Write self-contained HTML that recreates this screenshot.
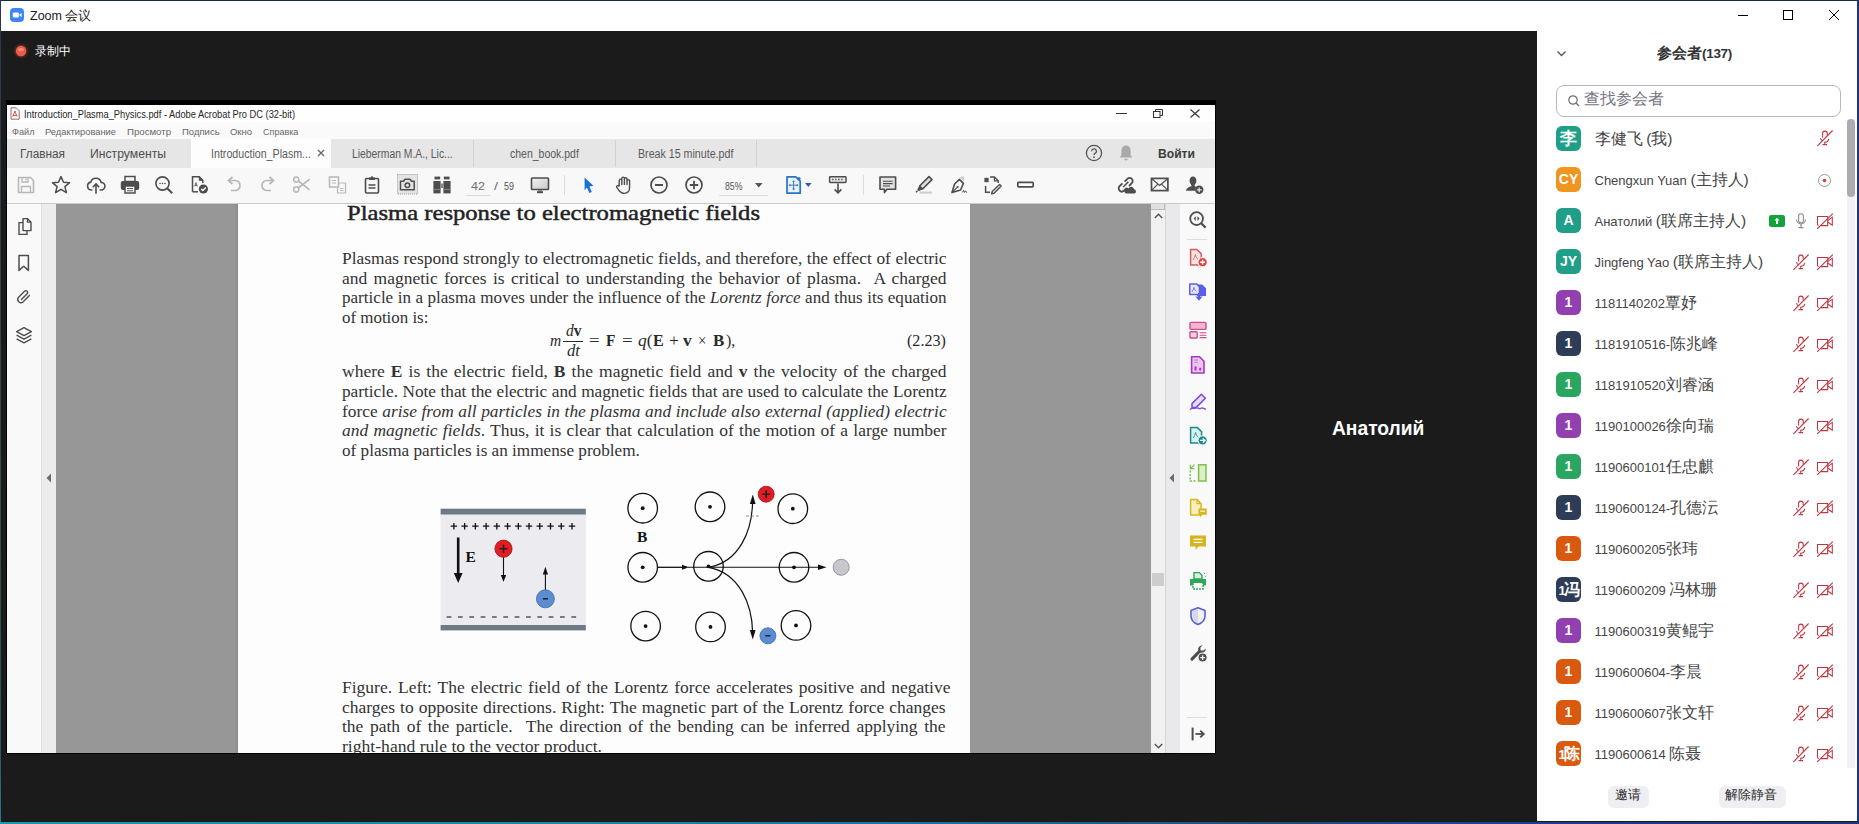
<!DOCTYPE html>
<html><head><meta charset="utf-8">
<style>
*{margin:0;padding:0;box-sizing:border-box}
html,body{width:1859px;height:824px;overflow:hidden;background:#1b1b1b;font-family:"Liberation Sans",sans-serif}
.a{position:absolute}
.t{position:absolute;white-space:nowrap}
svg.i{position:absolute;overflow:visible}
.cj{font-family:"Liberation Sans",sans-serif}

</style></head><body>
<div class="a" style="left:0px;top:0px;width:1859px;height:1px;background:#1b2a48;"></div>
<div class="a" style="left:0px;top:0px;width:1px;height:824px;background:linear-gradient(180deg,#2a3550 0px,#3a4a40 400px,#2a5a60 760px,#2a7a90 824px);"></div>
<div class="a" style="left:1857px;top:0px;width:2px;height:824px;background:#1c3478;"></div>
<div class="a" style="left:0px;top:822px;width:1859px;height:2px;background:linear-gradient(90deg,#1a98b0 0px,#1a88a8 500px,#1d72a0 900px,#1c4c7c 1300px,#1e4890 1400px,#1c3a88 1600px,#1c3478 1859px);"></div>
<div class="a" style="left:1px;top:1px;width:1856px;height:30px;background:#ffffff;"></div>
<svg class="i" style="left:10px;top:8px;" width="14" height="14" viewBox="0 0 14 14"><rect x="0" y="0" width="14" height="14" rx="4" fill="#3d86f4"/><rect x="2.8" y="4.6" width="6" height="4.8" rx="1" fill="#fff"/><path d="M9.4 6.4 L11.6 5 V9 L9.4 7.6Z" fill="#fff"/></svg>
<div class="t" style="left:30.00px;top:10.02px;font-size:12.5px;line-height:12.5px;color:#1a1a1a;font-weight:400;font-family:'Liberation Sans',sans-serif;">Zoom <span style="font-size:13px">会议</span></div>
<div class="a" style="left:1738px;top:15px;width:10px;height:1px;background:#000;"></div>
<div class="a" style="left:1783px;top:10px;width:10px;height:10px;background:transparent;border:1px solid #000"></div>
<svg class="i" style="left:1829px;top:10px;" width="10" height="10" viewBox="0 0 10 10"><path d="M0 0L10 10M10 0L0 10" stroke="#000" stroke-width="1"/></svg>
<svg class="i" style="left:13px;top:43px;" width="16" height="16" viewBox="0 0 16 16"><defs><radialGradient id="rg"><stop offset="0.5" stop-color="#e0503a" stop-opacity="0.9"/><stop offset="1" stop-color="#e0503a" stop-opacity="0"/></radialGradient></defs><circle cx="8" cy="8" r="8" fill="url(#rg)" opacity="0.5"/><circle cx="8" cy="8" r="5.2" fill="#ee5a4a"/><ellipse cx="8" cy="6.5" rx="3" ry="1.6" fill="#ffaa99" opacity="0.6"/></svg>
<div class="t" style="left:35.00px;top:44.64px;font-size:12px;line-height:12px;color:#fff;font-weight:400;font-family:'Liberation Sans',sans-serif;">录制中</div>
<div class="t" style="left:1332.00px;top:417.57px;font-size:20px;line-height:20px;color:#fff;font-weight:700;font-family:'Liberation Sans',sans-serif;transform:scaleX(0.96);transform-origin:0 0">Анатолий</div>
<div class="a" style="left:1537px;top:31px;width:320px;height:790px;background:#ffffff;"></div>
<svg class="i" style="left:1557px;top:51px;" width="9" height="5" viewBox="0 0 9 5"><path d="M0.5 0.5L4.5 4.5L8.5 0.5" stroke="#555" stroke-width="1.3" fill="none"/></svg>
<div class="t" style="left:1657.00px;top:44.50px;font-size:15px;line-height:15px;color:#333;font-weight:700;font-family:'Liberation Sans',sans-serif;">参会者<span style="font-size:13.5px;letter-spacing:-0.3px">(137)</span></div>
<div class="a" style="left:1556px;top:85px;width:285px;height:32px;background:#fff;border:1px solid #b8b8c0;border-radius:8px"></div>
<svg class="i" style="left:1568px;top:95px;" width="12" height="12" viewBox="0 0 12 12"><circle cx="5" cy="5" r="4.2" stroke="#6e6e78" stroke-width="1.2" fill="none"/><path d="M8 8L11 11" stroke="#6e6e78" stroke-width="1.3"/></svg>
<div class="t" style="left:1584.00px;top:91.46px;font-size:16px;line-height:16px;color:#757584;font-weight:400;font-family:'Liberation Sans',sans-serif;">查找参会者</div>
<div class="a" style="left:1847px;top:119px;width:8px;height:649px;background:#f2f2f6;"></div>
<div class="a" style="left:1847px;top:119px;width:8px;height:78px;background:#ababb4;border-radius:4px"></div>
<div class="a" style="left:1556px;top:126px;width:25px;height:25px;border-radius:6px;background:#1f9f87;overflow:hidden"><div class="t" style="left:0;top:0;width:25px;height:25px;line-height:25px;text-align:center;color:#fff;font-weight:700;font-size:17px">李</div></div>
<div class="t" style="left:1594.50px;top:131.80px;font-size:13px;line-height:13px;color:#454545;font-weight:400;font-family:'Liberation Sans',sans-serif;"><span style="font-size:15.5px">李健飞</span> <span style="font-size:15.5px">(我)</span></div>
<svg class="i" style="left:1817px;top:130px;" width="16" height="16" viewBox="0 0 16 16"><path d="M5.6 7.6V3.4a2.3 2.3 0 0 1 4.6 0V5.2" stroke="#bf3540" stroke-width="1.05" fill="none"/><path d="M3.6 8a4.4 4.4 0 0 0 1.2 2.6M7 12.2a4.4 4.4 0 0 0 4.8-3.4" stroke="#bf3540" stroke-width="1.05" fill="none"/><path d="M7.8 12.4V14.4M5.6 14.6H10" stroke="#bf3540" stroke-width="1.1"/><path d="M0.4 15.8L15.6 0.5" stroke="#bf3540" stroke-width="1.1"/></svg>
<div class="a" style="left:1556px;top:167px;width:25px;height:25px;border-radius:6px;background:#f0951f;overflow:hidden"><div class="t" style="left:0;top:0;width:25px;height:25px;line-height:25px;text-align:center;color:#fff;font-weight:700;font-size:14px">CY</div></div>
<div class="t" style="left:1594.50px;top:172.80px;font-size:13px;line-height:13px;color:#454545;font-weight:400;font-family:'Liberation Sans',sans-serif;">Chengxun Yuan <span style="font-size:15.5px">(主持人)</span></div>
<svg class="i" style="left:1818px;top:174px;" width="13" height="13" viewBox="0 0 13 13"><circle cx="6.5" cy="6.5" r="6" stroke="#999" stroke-width="1" fill="none"/><circle cx="6.5" cy="6.5" r="1.8" fill="#e23b3b"/></svg>
<div class="a" style="left:1556px;top:208px;width:25px;height:25px;border-radius:6px;background:#1f9f87;overflow:hidden"><div class="t" style="left:0;top:0;width:25px;height:25px;line-height:25px;text-align:center;color:#fff;font-weight:700;font-size:14px">A</div></div>
<div class="t" style="left:1594.50px;top:213.80px;font-size:13px;line-height:13px;color:#454545;font-weight:400;font-family:'Liberation Sans',sans-serif;">Анатолий <span style="font-size:15.5px">(联席主持人)</span></div>
<svg class="i" style="left:1769px;top:215px;" width="16" height="12" viewBox="0 0 16 12"><rect width="16" height="12" rx="2.2" fill="#12a33a"/><path d="M8 2.8L10.6 5.6H9V9H7V5.6H5.4Z" fill="#fff"/></svg>
<svg class="i" style="left:1795px;top:213px;" width="12" height="16" viewBox="0 0 12 16"><rect x="3.6" y="0.8" width="4.8" height="9" rx="2.4" stroke="#8a8a8a" stroke-width="1.1" fill="none"/><path d="M1.6 6.6a4.4 4.4 0 0 0 8.8 0" stroke="#8a8a8a" stroke-width="1.1" fill="none"/><path d="M6 11V14.2M3.5 14.6H8.5" stroke="#8a8a8a" stroke-width="1.1"/></svg>
<svg class="i" style="left:1817px;top:213px;" width="17" height="16" viewBox="0 0 17 16"><path d="M1.6 12.6L0.5 11.5V3.5H10.7V12.6H4" stroke="#bf3540" stroke-width="1.05" fill="none"/><path d="M10.7 7.6L15.3 4.2V12.2L10.7 9" stroke="#bf3540" stroke-width="1.05" fill="none"/><path d="M0.2 15.8L15.8 0.6" stroke="#bf3540" stroke-width="1.1"/></svg>
<div class="a" style="left:1556px;top:249px;width:25px;height:25px;border-radius:6px;background:#1f9f87;overflow:hidden"><div class="t" style="left:0;top:0;width:25px;height:25px;line-height:25px;text-align:center;color:#fff;font-weight:700;font-size:14px">JY</div></div>
<div class="t" style="left:1594.50px;top:254.80px;font-size:13px;line-height:13px;color:#454545;font-weight:400;font-family:'Liberation Sans',sans-serif;">Jingfeng Yao <span style="font-size:15.5px">(联席主持人)</span></div>
<svg class="i" style="left:1793px;top:254px;" width="16" height="16" viewBox="0 0 16 16"><path d="M5.6 7.6V3.4a2.3 2.3 0 0 1 4.6 0V5.2" stroke="#bf3540" stroke-width="1.05" fill="none"/><path d="M3.6 8a4.4 4.4 0 0 0 1.2 2.6M7 12.2a4.4 4.4 0 0 0 4.8-3.4" stroke="#bf3540" stroke-width="1.05" fill="none"/><path d="M7.8 12.4V14.4M5.6 14.6H10" stroke="#bf3540" stroke-width="1.1"/><path d="M0.4 15.8L15.6 0.5" stroke="#bf3540" stroke-width="1.1"/></svg>
<svg class="i" style="left:1817px;top:254px;" width="17" height="16" viewBox="0 0 17 16"><path d="M1.6 12.6L0.5 11.5V3.5H10.7V12.6H4" stroke="#bf3540" stroke-width="1.05" fill="none"/><path d="M10.7 7.6L15.3 4.2V12.2L10.7 9" stroke="#bf3540" stroke-width="1.05" fill="none"/><path d="M0.2 15.8L15.8 0.6" stroke="#bf3540" stroke-width="1.1"/></svg>
<div class="a" style="left:1556px;top:290px;width:25px;height:25px;border-radius:6px;background:#9240b0;overflow:hidden"><div class="t" style="left:0;top:0;width:25px;height:25px;line-height:25px;text-align:center;color:#fff;font-weight:700;font-size:14px">1</div></div>
<div class="t" style="left:1594.50px;top:295.80px;font-size:13px;line-height:13px;color:#454545;font-weight:400;font-family:'Liberation Sans',sans-serif;">1181140202<span style="font-size:15.5px">覃妤</span></div>
<svg class="i" style="left:1793px;top:295px;" width="16" height="16" viewBox="0 0 16 16"><path d="M5.6 7.6V3.4a2.3 2.3 0 0 1 4.6 0V5.2" stroke="#bf3540" stroke-width="1.05" fill="none"/><path d="M3.6 8a4.4 4.4 0 0 0 1.2 2.6M7 12.2a4.4 4.4 0 0 0 4.8-3.4" stroke="#bf3540" stroke-width="1.05" fill="none"/><path d="M7.8 12.4V14.4M5.6 14.6H10" stroke="#bf3540" stroke-width="1.1"/><path d="M0.4 15.8L15.6 0.5" stroke="#bf3540" stroke-width="1.1"/></svg>
<svg class="i" style="left:1817px;top:295px;" width="17" height="16" viewBox="0 0 17 16"><path d="M1.6 12.6L0.5 11.5V3.5H10.7V12.6H4" stroke="#bf3540" stroke-width="1.05" fill="none"/><path d="M10.7 7.6L15.3 4.2V12.2L10.7 9" stroke="#bf3540" stroke-width="1.05" fill="none"/><path d="M0.2 15.8L15.8 0.6" stroke="#bf3540" stroke-width="1.1"/></svg>
<div class="a" style="left:1556px;top:331px;width:25px;height:25px;border-radius:6px;background:#2d3d57;overflow:hidden"><div class="t" style="left:0;top:0;width:25px;height:25px;line-height:25px;text-align:center;color:#fff;font-weight:700;font-size:14px">1</div></div>
<div class="t" style="left:1594.50px;top:336.80px;font-size:13px;line-height:13px;color:#454545;font-weight:400;font-family:'Liberation Sans',sans-serif;">1181910516-<span style="font-size:15.5px">陈兆峰</span></div>
<svg class="i" style="left:1793px;top:336px;" width="16" height="16" viewBox="0 0 16 16"><path d="M5.6 7.6V3.4a2.3 2.3 0 0 1 4.6 0V5.2" stroke="#bf3540" stroke-width="1.05" fill="none"/><path d="M3.6 8a4.4 4.4 0 0 0 1.2 2.6M7 12.2a4.4 4.4 0 0 0 4.8-3.4" stroke="#bf3540" stroke-width="1.05" fill="none"/><path d="M7.8 12.4V14.4M5.6 14.6H10" stroke="#bf3540" stroke-width="1.1"/><path d="M0.4 15.8L15.6 0.5" stroke="#bf3540" stroke-width="1.1"/></svg>
<svg class="i" style="left:1817px;top:336px;" width="17" height="16" viewBox="0 0 17 16"><path d="M1.6 12.6L0.5 11.5V3.5H10.7V12.6H4" stroke="#bf3540" stroke-width="1.05" fill="none"/><path d="M10.7 7.6L15.3 4.2V12.2L10.7 9" stroke="#bf3540" stroke-width="1.05" fill="none"/><path d="M0.2 15.8L15.8 0.6" stroke="#bf3540" stroke-width="1.1"/></svg>
<div class="a" style="left:1556px;top:372px;width:25px;height:25px;border-radius:6px;background:#2aa660;overflow:hidden"><div class="t" style="left:0;top:0;width:25px;height:25px;line-height:25px;text-align:center;color:#fff;font-weight:700;font-size:14px">1</div></div>
<div class="t" style="left:1594.50px;top:377.80px;font-size:13px;line-height:13px;color:#454545;font-weight:400;font-family:'Liberation Sans',sans-serif;">1181910520<span style="font-size:15.5px">刘睿涵</span></div>
<svg class="i" style="left:1793px;top:377px;" width="16" height="16" viewBox="0 0 16 16"><path d="M5.6 7.6V3.4a2.3 2.3 0 0 1 4.6 0V5.2" stroke="#bf3540" stroke-width="1.05" fill="none"/><path d="M3.6 8a4.4 4.4 0 0 0 1.2 2.6M7 12.2a4.4 4.4 0 0 0 4.8-3.4" stroke="#bf3540" stroke-width="1.05" fill="none"/><path d="M7.8 12.4V14.4M5.6 14.6H10" stroke="#bf3540" stroke-width="1.1"/><path d="M0.4 15.8L15.6 0.5" stroke="#bf3540" stroke-width="1.1"/></svg>
<svg class="i" style="left:1817px;top:377px;" width="17" height="16" viewBox="0 0 17 16"><path d="M1.6 12.6L0.5 11.5V3.5H10.7V12.6H4" stroke="#bf3540" stroke-width="1.05" fill="none"/><path d="M10.7 7.6L15.3 4.2V12.2L10.7 9" stroke="#bf3540" stroke-width="1.05" fill="none"/><path d="M0.2 15.8L15.8 0.6" stroke="#bf3540" stroke-width="1.1"/></svg>
<div class="a" style="left:1556px;top:413px;width:25px;height:25px;border-radius:6px;background:#9240b0;overflow:hidden"><div class="t" style="left:0;top:0;width:25px;height:25px;line-height:25px;text-align:center;color:#fff;font-weight:700;font-size:14px">1</div></div>
<div class="t" style="left:1594.50px;top:418.80px;font-size:13px;line-height:13px;color:#454545;font-weight:400;font-family:'Liberation Sans',sans-serif;">1190100026<span style="font-size:15.5px">徐向瑞</span></div>
<svg class="i" style="left:1793px;top:418px;" width="16" height="16" viewBox="0 0 16 16"><path d="M5.6 7.6V3.4a2.3 2.3 0 0 1 4.6 0V5.2" stroke="#bf3540" stroke-width="1.05" fill="none"/><path d="M3.6 8a4.4 4.4 0 0 0 1.2 2.6M7 12.2a4.4 4.4 0 0 0 4.8-3.4" stroke="#bf3540" stroke-width="1.05" fill="none"/><path d="M7.8 12.4V14.4M5.6 14.6H10" stroke="#bf3540" stroke-width="1.1"/><path d="M0.4 15.8L15.6 0.5" stroke="#bf3540" stroke-width="1.1"/></svg>
<svg class="i" style="left:1817px;top:418px;" width="17" height="16" viewBox="0 0 17 16"><path d="M1.6 12.6L0.5 11.5V3.5H10.7V12.6H4" stroke="#bf3540" stroke-width="1.05" fill="none"/><path d="M10.7 7.6L15.3 4.2V12.2L10.7 9" stroke="#bf3540" stroke-width="1.05" fill="none"/><path d="M0.2 15.8L15.8 0.6" stroke="#bf3540" stroke-width="1.1"/></svg>
<div class="a" style="left:1556px;top:454px;width:25px;height:25px;border-radius:6px;background:#2aa660;overflow:hidden"><div class="t" style="left:0;top:0;width:25px;height:25px;line-height:25px;text-align:center;color:#fff;font-weight:700;font-size:14px">1</div></div>
<div class="t" style="left:1594.50px;top:459.80px;font-size:13px;line-height:13px;color:#454545;font-weight:400;font-family:'Liberation Sans',sans-serif;">1190600101<span style="font-size:15.5px">任忠麒</span></div>
<svg class="i" style="left:1793px;top:459px;" width="16" height="16" viewBox="0 0 16 16"><path d="M5.6 7.6V3.4a2.3 2.3 0 0 1 4.6 0V5.2" stroke="#bf3540" stroke-width="1.05" fill="none"/><path d="M3.6 8a4.4 4.4 0 0 0 1.2 2.6M7 12.2a4.4 4.4 0 0 0 4.8-3.4" stroke="#bf3540" stroke-width="1.05" fill="none"/><path d="M7.8 12.4V14.4M5.6 14.6H10" stroke="#bf3540" stroke-width="1.1"/><path d="M0.4 15.8L15.6 0.5" stroke="#bf3540" stroke-width="1.1"/></svg>
<svg class="i" style="left:1817px;top:459px;" width="17" height="16" viewBox="0 0 17 16"><path d="M1.6 12.6L0.5 11.5V3.5H10.7V12.6H4" stroke="#bf3540" stroke-width="1.05" fill="none"/><path d="M10.7 7.6L15.3 4.2V12.2L10.7 9" stroke="#bf3540" stroke-width="1.05" fill="none"/><path d="M0.2 15.8L15.8 0.6" stroke="#bf3540" stroke-width="1.1"/></svg>
<div class="a" style="left:1556px;top:495px;width:25px;height:25px;border-radius:6px;background:#2d3d57;overflow:hidden"><div class="t" style="left:0;top:0;width:25px;height:25px;line-height:25px;text-align:center;color:#fff;font-weight:700;font-size:14px">1</div></div>
<div class="t" style="left:1594.50px;top:500.80px;font-size:13px;line-height:13px;color:#454545;font-weight:400;font-family:'Liberation Sans',sans-serif;">1190600124-<span style="font-size:15.5px">孔德沄</span></div>
<svg class="i" style="left:1793px;top:500px;" width="16" height="16" viewBox="0 0 16 16"><path d="M5.6 7.6V3.4a2.3 2.3 0 0 1 4.6 0V5.2" stroke="#bf3540" stroke-width="1.05" fill="none"/><path d="M3.6 8a4.4 4.4 0 0 0 1.2 2.6M7 12.2a4.4 4.4 0 0 0 4.8-3.4" stroke="#bf3540" stroke-width="1.05" fill="none"/><path d="M7.8 12.4V14.4M5.6 14.6H10" stroke="#bf3540" stroke-width="1.1"/><path d="M0.4 15.8L15.6 0.5" stroke="#bf3540" stroke-width="1.1"/></svg>
<svg class="i" style="left:1817px;top:500px;" width="17" height="16" viewBox="0 0 17 16"><path d="M1.6 12.6L0.5 11.5V3.5H10.7V12.6H4" stroke="#bf3540" stroke-width="1.05" fill="none"/><path d="M10.7 7.6L15.3 4.2V12.2L10.7 9" stroke="#bf3540" stroke-width="1.05" fill="none"/><path d="M0.2 15.8L15.8 0.6" stroke="#bf3540" stroke-width="1.1"/></svg>
<div class="a" style="left:1556px;top:536px;width:25px;height:25px;border-radius:6px;background:#d95a0e;overflow:hidden"><div class="t" style="left:0;top:0;width:25px;height:25px;line-height:25px;text-align:center;color:#fff;font-weight:700;font-size:14px">1</div></div>
<div class="t" style="left:1594.50px;top:541.80px;font-size:13px;line-height:13px;color:#454545;font-weight:400;font-family:'Liberation Sans',sans-serif;">1190600205<span style="font-size:15.5px">张玮</span></div>
<svg class="i" style="left:1793px;top:541px;" width="16" height="16" viewBox="0 0 16 16"><path d="M5.6 7.6V3.4a2.3 2.3 0 0 1 4.6 0V5.2" stroke="#bf3540" stroke-width="1.05" fill="none"/><path d="M3.6 8a4.4 4.4 0 0 0 1.2 2.6M7 12.2a4.4 4.4 0 0 0 4.8-3.4" stroke="#bf3540" stroke-width="1.05" fill="none"/><path d="M7.8 12.4V14.4M5.6 14.6H10" stroke="#bf3540" stroke-width="1.1"/><path d="M0.4 15.8L15.6 0.5" stroke="#bf3540" stroke-width="1.1"/></svg>
<svg class="i" style="left:1817px;top:541px;" width="17" height="16" viewBox="0 0 17 16"><path d="M1.6 12.6L0.5 11.5V3.5H10.7V12.6H4" stroke="#bf3540" stroke-width="1.05" fill="none"/><path d="M10.7 7.6L15.3 4.2V12.2L10.7 9" stroke="#bf3540" stroke-width="1.05" fill="none"/><path d="M0.2 15.8L15.8 0.6" stroke="#bf3540" stroke-width="1.1"/></svg>
<div class="a" style="left:1556px;top:577px;width:25px;height:25px;border-radius:6px;background:#2d3d57;overflow:hidden"><div class="t" style="left:0;top:0;width:25px;height:25px;line-height:25px;text-align:center;color:#fff;font-weight:700;font-size:13px;letter-spacing:-1.5px">1<span style="font-size:16px">冯</span></div></div>
<div class="t" style="left:1594.50px;top:582.80px;font-size:13px;line-height:13px;color:#454545;font-weight:400;font-family:'Liberation Sans',sans-serif;">1190600209 <span style="font-size:15.5px">冯林珊</span></div>
<svg class="i" style="left:1793px;top:582px;" width="16" height="16" viewBox="0 0 16 16"><path d="M5.6 7.6V3.4a2.3 2.3 0 0 1 4.6 0V5.2" stroke="#bf3540" stroke-width="1.05" fill="none"/><path d="M3.6 8a4.4 4.4 0 0 0 1.2 2.6M7 12.2a4.4 4.4 0 0 0 4.8-3.4" stroke="#bf3540" stroke-width="1.05" fill="none"/><path d="M7.8 12.4V14.4M5.6 14.6H10" stroke="#bf3540" stroke-width="1.1"/><path d="M0.4 15.8L15.6 0.5" stroke="#bf3540" stroke-width="1.1"/></svg>
<svg class="i" style="left:1817px;top:582px;" width="17" height="16" viewBox="0 0 17 16"><path d="M1.6 12.6L0.5 11.5V3.5H10.7V12.6H4" stroke="#bf3540" stroke-width="1.05" fill="none"/><path d="M10.7 7.6L15.3 4.2V12.2L10.7 9" stroke="#bf3540" stroke-width="1.05" fill="none"/><path d="M0.2 15.8L15.8 0.6" stroke="#bf3540" stroke-width="1.1"/></svg>
<div class="a" style="left:1556px;top:618px;width:25px;height:25px;border-radius:6px;background:#9240b0;overflow:hidden"><div class="t" style="left:0;top:0;width:25px;height:25px;line-height:25px;text-align:center;color:#fff;font-weight:700;font-size:14px">1</div></div>
<div class="t" style="left:1594.50px;top:623.80px;font-size:13px;line-height:13px;color:#454545;font-weight:400;font-family:'Liberation Sans',sans-serif;">1190600319<span style="font-size:15.5px">黄鲲宇</span></div>
<svg class="i" style="left:1793px;top:623px;" width="16" height="16" viewBox="0 0 16 16"><path d="M5.6 7.6V3.4a2.3 2.3 0 0 1 4.6 0V5.2" stroke="#bf3540" stroke-width="1.05" fill="none"/><path d="M3.6 8a4.4 4.4 0 0 0 1.2 2.6M7 12.2a4.4 4.4 0 0 0 4.8-3.4" stroke="#bf3540" stroke-width="1.05" fill="none"/><path d="M7.8 12.4V14.4M5.6 14.6H10" stroke="#bf3540" stroke-width="1.1"/><path d="M0.4 15.8L15.6 0.5" stroke="#bf3540" stroke-width="1.1"/></svg>
<svg class="i" style="left:1817px;top:623px;" width="17" height="16" viewBox="0 0 17 16"><path d="M1.6 12.6L0.5 11.5V3.5H10.7V12.6H4" stroke="#bf3540" stroke-width="1.05" fill="none"/><path d="M10.7 7.6L15.3 4.2V12.2L10.7 9" stroke="#bf3540" stroke-width="1.05" fill="none"/><path d="M0.2 15.8L15.8 0.6" stroke="#bf3540" stroke-width="1.1"/></svg>
<div class="a" style="left:1556px;top:659px;width:25px;height:25px;border-radius:6px;background:#d95a0e;overflow:hidden"><div class="t" style="left:0;top:0;width:25px;height:25px;line-height:25px;text-align:center;color:#fff;font-weight:700;font-size:14px">1</div></div>
<div class="t" style="left:1594.50px;top:664.80px;font-size:13px;line-height:13px;color:#454545;font-weight:400;font-family:'Liberation Sans',sans-serif;">1190600604-<span style="font-size:15.5px">李晨</span></div>
<svg class="i" style="left:1793px;top:664px;" width="16" height="16" viewBox="0 0 16 16"><path d="M5.6 7.6V3.4a2.3 2.3 0 0 1 4.6 0V5.2" stroke="#bf3540" stroke-width="1.05" fill="none"/><path d="M3.6 8a4.4 4.4 0 0 0 1.2 2.6M7 12.2a4.4 4.4 0 0 0 4.8-3.4" stroke="#bf3540" stroke-width="1.05" fill="none"/><path d="M7.8 12.4V14.4M5.6 14.6H10" stroke="#bf3540" stroke-width="1.1"/><path d="M0.4 15.8L15.6 0.5" stroke="#bf3540" stroke-width="1.1"/></svg>
<svg class="i" style="left:1817px;top:664px;" width="17" height="16" viewBox="0 0 17 16"><path d="M1.6 12.6L0.5 11.5V3.5H10.7V12.6H4" stroke="#bf3540" stroke-width="1.05" fill="none"/><path d="M10.7 7.6L15.3 4.2V12.2L10.7 9" stroke="#bf3540" stroke-width="1.05" fill="none"/><path d="M0.2 15.8L15.8 0.6" stroke="#bf3540" stroke-width="1.1"/></svg>
<div class="a" style="left:1556px;top:700px;width:25px;height:25px;border-radius:6px;background:#d95a0e;overflow:hidden"><div class="t" style="left:0;top:0;width:25px;height:25px;line-height:25px;text-align:center;color:#fff;font-weight:700;font-size:14px">1</div></div>
<div class="t" style="left:1594.50px;top:705.80px;font-size:13px;line-height:13px;color:#454545;font-weight:400;font-family:'Liberation Sans',sans-serif;">1190600607<span style="font-size:15.5px">张文轩</span></div>
<svg class="i" style="left:1793px;top:705px;" width="16" height="16" viewBox="0 0 16 16"><path d="M5.6 7.6V3.4a2.3 2.3 0 0 1 4.6 0V5.2" stroke="#bf3540" stroke-width="1.05" fill="none"/><path d="M3.6 8a4.4 4.4 0 0 0 1.2 2.6M7 12.2a4.4 4.4 0 0 0 4.8-3.4" stroke="#bf3540" stroke-width="1.05" fill="none"/><path d="M7.8 12.4V14.4M5.6 14.6H10" stroke="#bf3540" stroke-width="1.1"/><path d="M0.4 15.8L15.6 0.5" stroke="#bf3540" stroke-width="1.1"/></svg>
<svg class="i" style="left:1817px;top:705px;" width="17" height="16" viewBox="0 0 17 16"><path d="M1.6 12.6L0.5 11.5V3.5H10.7V12.6H4" stroke="#bf3540" stroke-width="1.05" fill="none"/><path d="M10.7 7.6L15.3 4.2V12.2L10.7 9" stroke="#bf3540" stroke-width="1.05" fill="none"/><path d="M0.2 15.8L15.8 0.6" stroke="#bf3540" stroke-width="1.1"/></svg>
<div class="a" style="left:1556px;top:741px;width:25px;height:25px;border-radius:6px;background:#d95a0e;overflow:hidden"><div class="t" style="left:0;top:0;width:25px;height:25px;line-height:25px;text-align:center;color:#fff;font-weight:700;font-size:13px;letter-spacing:-1.5px">1<span style="font-size:16px">陈</span></div></div>
<div class="t" style="left:1594.50px;top:746.80px;font-size:13px;line-height:13px;color:#454545;font-weight:400;font-family:'Liberation Sans',sans-serif;">1190600614 <span style="font-size:15.5px">陈聂</span></div>
<svg class="i" style="left:1793px;top:746px;" width="16" height="16" viewBox="0 0 16 16"><path d="M5.6 7.6V3.4a2.3 2.3 0 0 1 4.6 0V5.2" stroke="#bf3540" stroke-width="1.05" fill="none"/><path d="M3.6 8a4.4 4.4 0 0 0 1.2 2.6M7 12.2a4.4 4.4 0 0 0 4.8-3.4" stroke="#bf3540" stroke-width="1.05" fill="none"/><path d="M7.8 12.4V14.4M5.6 14.6H10" stroke="#bf3540" stroke-width="1.1"/><path d="M0.4 15.8L15.6 0.5" stroke="#bf3540" stroke-width="1.1"/></svg>
<svg class="i" style="left:1817px;top:746px;" width="17" height="16" viewBox="0 0 17 16"><path d="M1.6 12.6L0.5 11.5V3.5H10.7V12.6H4" stroke="#bf3540" stroke-width="1.05" fill="none"/><path d="M10.7 7.6L15.3 4.2V12.2L10.7 9" stroke="#bf3540" stroke-width="1.05" fill="none"/><path d="M0.2 15.8L15.8 0.6" stroke="#bf3540" stroke-width="1.1"/></svg>
<div class="a" style="left:1608px;top:786px;width:41px;height:22px;background:#eeeef3;border-radius:6px"></div>
<div class="t" style="left:1615.00px;top:788.00px;font-size:13px;line-height:13px;color:#2a2a2a;font-weight:400;font-family:'Liberation Sans',sans-serif;">邀请</div>
<div class="a" style="left:1719px;top:786px;width:67px;height:22px;background:#eeeef3;border-radius:6px"></div>
<div class="t" style="left:1725.00px;top:788.00px;font-size:13px;line-height:13px;color:#2a2a2a;font-weight:400;font-family:'Liberation Sans',sans-serif;">解除静音</div>
<div class="a" style="left:6px;top:100px;width:1210px;height:5px;background:#000;"></div>
<div class="a" style="left:6px;top:100px;width:1px;height:654px;background:#000;"></div>
<div class="a" style="left:1215px;top:100px;width:1px;height:654px;background:#000;"></div>
<div class="a" style="left:6px;top:753px;width:1210px;height:1px;background:#000;"></div>
<div class="a" style="left:7px;top:105px;width:1208px;height:17px;background:#fefefe;"></div>
<svg class="i" style="left:10px;top:107px;" width="10" height="13" viewBox="0 0 10 13"><path d="M1 0.8H6.2L9.2 3.8V12.2H1Z" stroke="#8c6c6c" stroke-width="1" fill="#fff"/><path d="M5 4C4.4 6 3.6 8 2.6 9.6M5 4C5.4 6 6.2 8 7.6 9.4M3 8.6H7" stroke="#e03838" stroke-width="0.9" fill="none"/></svg>
<div class="t" style="left:24.00px;top:109.53px;font-size:10px;line-height:10px;color:#262626;font-weight:400;font-family:'Liberation Sans',sans-serif;transform:scaleX(0.9287);transform-origin:0 0;">Introduction_Plasma_Physics.pdf - Adobe Acrobat Pro DC (32-bit)</div>
<div class="a" style="left:1116px;top:113px;width:11px;height:1px;background:#333;"></div>
<svg class="i" style="left:1153px;top:109px;" width="10" height="9" viewBox="0 0 10 9"><rect x="0.5" y="2.5" width="6.5" height="6" stroke="#333" stroke-width="1" fill="#fff"/><path d="M2.5 2.5V0.5H9.5V6.5H7" stroke="#333" stroke-width="1" fill="none"/></svg>
<svg class="i" style="left:1190px;top:109px;" width="10" height="9" viewBox="0 0 10 9"><path d="M0.5 0.5L9.5 8.5M9.5 0.5L0.5 8.5" stroke="#333" stroke-width="1.1"/></svg>
<div class="a" style="left:7px;top:122px;width:1208px;height:17px;background:#fafafb;"></div>
<div class="t" style="left:12.00px;top:126.76px;font-size:9.5px;line-height:9.5px;color:#666666;font-weight:400;font-family:'Liberation Sans',sans-serif;transform:scaleX(0.9632);transform-origin:0 0;">Файл</div>
<div class="t" style="left:45.00px;top:126.76px;font-size:9.5px;line-height:9.5px;color:#666666;font-weight:400;font-family:'Liberation Sans',sans-serif;transform:scaleX(0.9810);transform-origin:0 0;">Редактирование</div>
<div class="t" style="left:127.00px;top:126.76px;font-size:9.5px;line-height:9.5px;color:#666666;font-weight:400;font-family:'Liberation Sans',sans-serif;transform:scaleX(1.0140);transform-origin:0 0;">Просмотр</div>
<div class="t" style="left:182.00px;top:126.76px;font-size:9.5px;line-height:9.5px;color:#666666;font-weight:400;font-family:'Liberation Sans',sans-serif;transform:scaleX(0.9998);transform-origin:0 0;">Подпись</div>
<div class="t" style="left:230.00px;top:126.76px;font-size:9.5px;line-height:9.5px;color:#666666;font-weight:400;font-family:'Liberation Sans',sans-serif;transform:scaleX(0.9965);transform-origin:0 0;">Окно</div>
<div class="t" style="left:262.60px;top:126.76px;font-size:9.5px;line-height:9.5px;color:#666666;font-weight:400;font-family:'Liberation Sans',sans-serif;transform:scaleX(0.9495);transform-origin:0 0;">Справка</div>
<div class="a" style="left:7px;top:139px;width:1208px;height:29px;background:#e6e6e6;"></div>
<div class="a" style="left:191px;top:139px;width:140px;height:29px;background:#fdfdfd;"></div>
<div class="a" style="left:473px;top:140px;width:1px;height:27px;background:#d2d2d2;"></div>
<div class="a" style="left:615px;top:140px;width:1px;height:27px;background:#d2d2d2;"></div>
<div class="a" style="left:756px;top:140px;width:1px;height:27px;background:#d2d2d2;"></div>
<div class="t" style="left:20.00px;top:148.24px;font-size:12px;line-height:12px;color:#4e4e4e;font-weight:400;font-family:'Liberation Sans',sans-serif;transform:scaleX(0.9850);transform-origin:0 0;">Главная</div>
<div class="t" style="left:90.00px;top:148.24px;font-size:12px;line-height:12px;color:#4e4e4e;font-weight:400;font-family:'Liberation Sans',sans-serif;transform:scaleX(1.0157);transform-origin:0 0;">Инструменты</div>
<div class="t" style="left:211.00px;top:148.24px;font-size:12px;line-height:12px;color:#5a5a5a;font-weight:400;font-family:'Liberation Sans',sans-serif;transform:scaleX(0.8870);transform-origin:0 0;">Introduction_Plasm...</div>
<svg class="i" style="left:317px;top:149px;" width="8" height="8" viewBox="0 0 8 8"><path d="M1 1L7 7M7 1L1 7" stroke="#666" stroke-width="1.3"/></svg>
<div class="t" style="left:352.00px;top:148.24px;font-size:12px;line-height:12px;color:#5a5a5a;font-weight:400;font-family:'Liberation Sans',sans-serif;transform:scaleX(0.8628);transform-origin:0 0;">Lieberman M.A., Lic...</div>
<div class="t" style="left:509.70px;top:148.24px;font-size:12px;line-height:12px;color:#5a5a5a;font-weight:400;font-family:'Liberation Sans',sans-serif;transform:scaleX(0.8738);transform-origin:0 0;">chen_book.pdf</div>
<div class="t" style="left:637.60px;top:148.24px;font-size:12px;line-height:12px;color:#5a5a5a;font-weight:400;font-family:'Liberation Sans',sans-serif;transform:scaleX(0.8882);transform-origin:0 0;">Break 15 minute.pdf</div>
<svg class="i" style="left:1085px;top:144px;" width="18" height="18" viewBox="0 0 18 18"><circle cx="9" cy="9" r="7.6" stroke="#555" stroke-width="1.3" fill="none"/><path d="M6.6 7.2a2.4 2.4 0 1 1 3.4 2.2c-0.7 0.4-1 0.8-1 1.6" stroke="#555" stroke-width="1.3" fill="none"/><circle cx="9" cy="13.2" r="0.9" fill="#555"/></svg>
<svg class="i" style="left:1118px;top:144px;" width="16" height="18" viewBox="0 0 16 18"><path d="M8 1.5c-3 0-4.6 2.3-4.6 5.2v4.2L1.8 13.6H14.2L12.6 10.9V6.7C12.6 3.8 11 1.5 8 1.5Z" fill="#a9a9a9"/><path d="M6.2 14.8a1.8 1.8 0 0 0 3.6 0Z" fill="#a9a9a9"/></svg>
<div class="t" style="left:1158.00px;top:147.84px;font-size:12px;line-height:12px;color:#3c3c3c;font-weight:700;font-family:'Liberation Sans',sans-serif;transform:scaleX(1.0098);transform-origin:0 0;">Войти</div>
<div class="a" style="left:7px;top:168px;width:1208px;height:35px;background:#f8f8f8;"></div>
<div class="a" style="left:7px;top:203px;width:1208px;height:1px;background:#cacaca;"></div>
<svg class="i" style="left:16px;top:175px;" width="20" height="20" viewBox="0 0 20 20"><path d="M2.5 2.5H14.5L17.5 5.5V17.5H2.5Z" stroke="#b7b7b7" stroke-width="1.6" fill="none"/><path d="M6 2.5V7H12V2.5M10 3.8V5.6" stroke="#b7b7b7" stroke-width="1.3" fill="none"/><path d="M5.5 17.5V11.5H14.5V17.5" stroke="#b7b7b7" stroke-width="1.3" fill="none"/></svg>
<svg class="i" style="left:51px;top:175px;" width="20" height="20" viewBox="0 0 20 20"><path d="M10 1.6L12.5 7.3L18.6 7.7L13.9 11.6L15.4 17.6L10 14.3L4.6 17.6L6.1 11.6L1.4 7.7L7.5 7.3Z" stroke="#4d4d4d" stroke-width="1.5" fill="none" stroke-linejoin="round"/></svg>
<svg class="i" style="left:86px;top:175px;" width="20" height="20" viewBox="0 0 20 20"><path d="M6.4 15H5.2A4 4 0 0 1 4.8 7.1A5.4 5.4 0 0 1 15.2 7.4A3.8 3.8 0 0 1 15 15H13.6" stroke="#4d4d4d" stroke-width="1.6" fill="none"/><path d="M10 18.8V9.2M6.8 12.2L10 9L13.2 12.2" stroke="#4d4d4d" stroke-width="1.6" fill="none"/></svg>
<svg class="i" style="left:120px;top:175px;" width="20" height="20" viewBox="0 0 20 20"><rect x="5" y="1.5" width="10" height="5" stroke="#4d4d4d" stroke-width="1.5" fill="none"/><rect x="0.8" y="6" width="18.4" height="9" rx="2" fill="#4d4d4d"/><rect x="5" y="11" width="10" height="7" fill="#fff" stroke="#4d4d4d" stroke-width="1.5"/><path d="M7 13.6H13M7 15.8H13" stroke="#4d4d4d" stroke-width="1"/></svg>
<svg class="i" style="left:154px;top:175px;" width="20" height="20" viewBox="0 0 20 20"><circle cx="8.5" cy="8.5" r="6.6" stroke="#4d4d4d" stroke-width="1.6" fill="none"/><circle cx="6" cy="8.5" r="0.8" fill="#4d4d4d"/><circle cx="8.5" cy="8.5" r="0.8" fill="#4d4d4d"/><circle cx="11" cy="8.5" r="0.8" fill="#4d4d4d"/><path d="M13.2 13.2L18.2 18.2" stroke="#4d4d4d" stroke-width="2"/></svg>
<svg class="i" style="left:190px;top:175px;" width="20" height="20" viewBox="0 0 20 20"><path d="M2.5 16.8V1.8H9.3L12.8 5.3V8" stroke="#4d4d4d" stroke-width="1.5" fill="none"/><path d="M9.3 1.8V5.3H12.8" fill="#4d4d4d" stroke="#4d4d4d" stroke-width="1"/><path d="M2.5 16.8H8" stroke="#4d4d4d" stroke-width="1.5"/><path d="M4.6 11.5L6 7.6L7.4 11.5M5 10.4H7" stroke="#4d4d4d" stroke-width="0.8" fill="none"/><circle cx="13.4" cy="14" r="4.6" fill="#4d4d4d"/><path d="M11.2 14L12.8 15.6L15.8 12.4" stroke="#fff" stroke-width="1.4" fill="none"/></svg>
<svg class="i" style="left:224px;top:175px;" width="20" height="20" viewBox="0 0 20 20"><path d="M5.5 5.5H11A5 5 0 0 1 11 15.5H7" stroke="#b7b7b7" stroke-width="1.7" fill="none"/><path d="M8.5 2L4.4 5.5L8.5 9" stroke="#b7b7b7" stroke-width="1.7" fill="none"/></svg>
<svg class="i" style="left:258px;top:175px;" width="20" height="20" viewBox="0 0 20 20"><path d="M14.5 5.5H9A5 5 0 0 0 9 15.5H13" stroke="#b7b7b7" stroke-width="1.7" fill="none"/><path d="M11.5 2L15.6 5.5L11.5 9" stroke="#b7b7b7" stroke-width="1.7" fill="none"/></svg>
<svg class="i" style="left:292px;top:175px;" width="20" height="20" viewBox="0 0 20 20"><circle cx="4.2" cy="4.6" r="2.6" stroke="#b7b7b7" stroke-width="1.5" fill="none"/><circle cx="4.2" cy="14.4" r="2.6" stroke="#b7b7b7" stroke-width="1.5" fill="none"/><path d="M6.4 6L17.6 14.8M6.4 13L17.6 4.2" stroke="#b7b7b7" stroke-width="1.6"/></svg>
<svg class="i" style="left:328px;top:175px;" width="20" height="20" viewBox="0 0 20 20"><rect x="1.5" y="2" width="9" height="10" stroke="#b7b7b7" stroke-width="1.5" fill="none"/><path d="M4 5.5H8M4 8H8" stroke="#b7b7b7" stroke-width="1.1"/><path d="M11 8H17.5V18H9.5V13" stroke="#b7b7b7" stroke-width="1.2" fill="none"/><path d="M12 13.5H15.5M12 15.5H15.5" stroke="#b7b7b7" stroke-width="1"/></svg>
<svg class="i" style="left:362px;top:175px;" width="20" height="20" viewBox="0 0 20 20"><rect x="3.5" y="3.5" width="13" height="14.5" rx="1.2" stroke="#4d4d4d" stroke-width="1.6" fill="none"/><path d="M7 3.5V2.5H8.8A1.2 1.2 0 0 1 11.2 2.5H13V5H7Z" fill="#4d4d4d"/><path d="M6.5 10H13.5M6.5 13H13.5" stroke="#4d4d4d" stroke-width="1.4"/></svg>
<svg class="i" style="left:397px;top:174px;" width="21" height="21" viewBox="0 0 21 21"><rect x="0.5" y="0.5" width="20" height="19.5" fill="#e4e4e4" stroke="#9a9a9a" stroke-width="1" stroke-dasharray="1 1"/><path d="M3.5 7.2H6.5L8 5.2H13L14.5 7.2H17.2V15.8H3.5Z" stroke="#4d4d4d" stroke-width="1.5" fill="none" stroke-linejoin="round"/><circle cx="10.4" cy="11.2" r="2.3" stroke="#4d4d4d" stroke-width="1.5" fill="none"/></svg>
<svg class="i" style="left:432px;top:175px;" width="20" height="20" viewBox="0 0 20 20"><path d="M2.5 1.6H8.2V4.4H2.5Z" fill="#4d4d4d"/><path d="M11.8 1.6H17.5V4.4H11.8Z" fill="#4d4d4d"/><path d="M1.4 6H8.6V18.4H1.4Z" fill="#4d4d4d"/><path d="M11.4 6H18.6V18.4H11.4Z" fill="#4d4d4d"/><path d="M8.6 8.5H11.4V13H8.6Z" fill="#8a8a8a"/><path d="M1.4 14.4H8.6M11.4 14.4H18.6" stroke="#888" stroke-width="1"/></svg>
<div class="t" style="left:470.50px;top:180.69px;font-size:11px;line-height:11px;color:#6e6e6e;font-weight:400;font-family:'Liberation Sans',sans-serif;transform:scaleX(1.1429);transform-origin:0 0;">42</div>
<div class="a" style="left:466px;top:195px;width:24px;height:1px;background:#dadada;"></div>
<div class="t" style="left:494.00px;top:180.69px;font-size:11px;line-height:11px;color:#6e6e6e;font-weight:400;font-family:'Liberation Sans',sans-serif;transform:scaleX(1.3061);transform-origin:0 0;">/</div>
<div class="t" style="left:503.50px;top:180.69px;font-size:11px;line-height:11px;color:#555555;font-weight:400;font-family:'Liberation Sans',sans-serif;transform:scaleX(0.8163);transform-origin:0 0;">59</div>
<svg class="i" style="left:530px;top:175px;" width="20" height="20" viewBox="0 0 20 20"><defs><linearGradient id="mg" x1="0" y1="0" x2="1" y2="1"><stop offset="0" stop-color="#f4f4f4"/><stop offset="1" stop-color="#c8c8c8"/></linearGradient></defs><rect x="1.5" y="3" width="17" height="11.5" rx="0.8" fill="url(#mg)" stroke="#4d4d4d" stroke-width="1.6"/><path d="M7 17.2H13" stroke="#4d4d4d" stroke-width="2"/><path d="M9 14.5V16.5M11 14.5V16.5" stroke="#4d4d4d" stroke-width="1"/></svg>
<div class="a" style="left:564px;top:175px;width:1px;height:20px;background:#dddddd;"></div>
<svg class="i" style="left:579px;top:175px;" width="20" height="20" viewBox="0 0 20 20"><path d="M5.6 2.4L14.4 10.8L10.4 11.4L12.8 17L10.4 18L8 12.4L5.6 15.2Z" fill="#1a6fd4"/></svg>
<svg class="i" style="left:614px;top:175px;" width="20" height="20" viewBox="0 0 20 20"><path d="M5.2 11.5V5.4A1.3 1.3 0 0 1 7.8 5.4V9.6V3.4A1.3 1.3 0 0 1 10.4 3.4V9.4V4A1.3 1.3 0 0 1 13 4V9.6V6A1.3 1.3 0 0 1 15.6 6V12.6C15.6 16 13.5 18.4 10.2 18.4C7.6 18.4 6.2 17 4.8 15.2L2.6 12.2A1.3 1.3 0 0 1 4.6 10.8L5.2 11.5" stroke="#4d4d4d" stroke-width="1.4" fill="none" stroke-linejoin="round"/></svg>
<svg class="i" style="left:649px;top:175px;" width="20" height="20" viewBox="0 0 20 20"><circle cx="10" cy="10" r="8" stroke="#4d4d4d" stroke-width="1.7" fill="none"/><path d="M6 10H14" stroke="#4d4d4d" stroke-width="2"/></svg>
<svg class="i" style="left:684px;top:175px;" width="20" height="20" viewBox="0 0 20 20"><circle cx="10" cy="10" r="8" stroke="#4d4d4d" stroke-width="1.7" fill="none"/><path d="M5.8 10H14.2M10 5.8V14.2" stroke="#4d4d4d" stroke-width="1.8"/></svg>
<div class="t" style="left:725.00px;top:180.69px;font-size:11px;line-height:11px;color:#555;font-weight:400;font-family:'Liberation Sans',sans-serif;transform:scaleX(0.7943);transform-origin:0 0;">85%</div>
<svg class="i" style="left:755px;top:183px;" width="8" height="5" viewBox="0 0 8 5"><path d="M0 0H7.6L3.8 4.4Z" fill="#555"/></svg>
<div class="a" style="left:719px;top:195px;width:49px;height:1px;background:#dcdcdc;"></div>
<svg class="i" style="left:784px;top:175px;" width="20" height="20" viewBox="0 0 20 20"><path d="M3 1.8H11.8L16.2 6.2V18.2H3Z" fill="#e8f2fc" stroke="#2a73c8" stroke-width="1.7" stroke-linejoin="round"/><circle cx="15" cy="3.6" r="1.6" fill="#2a73c8"/><path d="M9.6 6V14.6M5.4 10.2H13.8" stroke="#2a73c8" stroke-width="0.9"/><path d="M9.6 5.2L8.2 7H11Z M9.6 15.4L8.2 13.6H11Z M4.6 10.2L6.4 8.8V11.6Z M14.6 10.2L12.8 8.8V11.6Z" fill="#2a73c8"/></svg>
<svg class="i" style="left:805px;top:183px;" width="7" height="5" viewBox="0 0 7 5"><path d="M0 0H6.6L3.3 4Z" fill="#2a5db0"/></svg>
<svg class="i" style="left:828px;top:175px;" width="20" height="20" viewBox="0 0 20 20"><rect x="1.6" y="1.8" width="16.4" height="5.6" rx="0.6" fill="#e8e8e8" stroke="#4d4d4d" stroke-width="1.5"/><path d="M4.2 4.6H5.6M7.2 4.6H8.6M10.2 4.6H11.6M13.2 4.6H14.6" stroke="#4d4d4d" stroke-width="1.5"/><path d="M10 8.6V17.8M6.6 14.4L10 17.8L13.4 14.4" stroke="#4d4d4d" stroke-width="1.6" fill="none"/></svg>
<div class="a" style="left:863px;top:175px;width:1px;height:20px;background:#dddddd;"></div>
<svg class="i" style="left:878px;top:175px;" width="20" height="20" viewBox="0 0 20 20"><path d="M2 2H17.6V14.2H9L6.4 17.6V14.2H2Z" fill="#e2e2e2" stroke="#4d4d4d" stroke-width="1.6" stroke-linejoin="round"/><path d="M5 6.2H14.6M5 8.6H14.6M5 11H12" stroke="#4d4d4d" stroke-width="1.1"/></svg>
<svg class="i" style="left:914px;top:175px;" width="20" height="20" viewBox="0 0 20 20"><path d="M15 1.6L18 4.6L8.6 14L5.6 11Z" fill="#e0e0e0" stroke="#4d4d4d" stroke-width="1.6" stroke-linejoin="round"/><path d="M5.6 11L3.8 14.8L4.6 15.6L8.6 14" fill="#4d4d4d" stroke="#4d4d4d" stroke-width="1"/><path d="M2 17.2L3.6 15.8" stroke="#4d4d4d" stroke-width="1.5"/><path d="M5.6 17.6H18" stroke="#cfcfcf" stroke-width="2.2"/></svg>
<svg class="i" style="left:948px;top:175px;" width="20" height="20" viewBox="0 0 20 20"><path d="M11.4 4.4L15.4 8.4L12.6 15L4 17.6L6.6 9Z" stroke="#4d4d4d" stroke-width="1.6" fill="none" stroke-linejoin="round"/><path d="M11.6 2L16 1.6V6.4Z" fill="#c8c8c8"/><path d="M4.4 17.2L9.2 12.4" stroke="#4d4d4d" stroke-width="1.1"/><circle cx="9.6" cy="12" r="1.1" fill="#4d4d4d"/><path d="M14.4 17.4L15.6 15.4L16.4 17.4L17.6 15.8L18.6 17.6" stroke="#4d4d4d" stroke-width="1" fill="none"/></svg>
<svg class="i" style="left:982px;top:175px;" width="20" height="20" viewBox="0 0 20 20"><path d="M2.4 2.8H6.6V7.2H2.4Z" fill="#4d4d4d"/><path d="M8 2H12.4L16.2 5.8V8" stroke="#4d4d4d" stroke-width="1.4" fill="none"/><path d="M12.4 2V5.8H16.2" stroke="#4d4d4d" stroke-width="1.2" fill="none"/><path d="M3.6 11V17.2H8" stroke="#4d4d4d" stroke-width="1.5" fill="none"/><path d="M17.6 9.4L19.2 11L12 18.2L9.6 18.8L10.2 16.6Z" stroke="#4d4d4d" stroke-width="1.4" fill="none" stroke-linejoin="round"/></svg>
<svg class="i" style="left:1016px;top:175px;" width="20" height="20" viewBox="0 0 20 20"><rect x="1.8" y="7.4" width="15.4" height="4.4" rx="0.8" stroke="#4d4d4d" stroke-width="1.7" fill="#fff"/></svg>
<svg class="i" style="left:1116px;top:175px;" width="20" height="20" viewBox="0 0 20 20"><path d="M8.6 6.6L11.4 3.8A3.1 3.1 0 0 1 15.8 8.2L13 11" stroke="#4d4d4d" stroke-width="1.8" fill="none"/><path d="M10.8 12.8L8 15.6A3.1 3.1 0 0 1 3.6 11.2L6.4 8.4" stroke="#4d4d4d" stroke-width="1.8" fill="none"/><path d="M7.2 12L12.4 6.8" stroke="#4d4d4d" stroke-width="1.6"/><path d="M9.8 18.4H18.6A2.2 2.2 0 0 0 18.2 14.2A3 3 0 0 0 12.8 13.2A2.6 2.6 0 0 0 9.8 18.4Z" fill="#4d4d4d"/></svg>
<svg class="i" style="left:1150px;top:175px;" width="20" height="20" viewBox="0 0 20 20"><rect x="1.5" y="3.4" width="16.4" height="12.2" stroke="#4d4d4d" stroke-width="1.7" fill="none"/><path d="M1.8 3.8L9.7 10.4L17.6 3.8M1.8 15.2L7.6 9.4M17.6 15.2L11.8 9.4" stroke="#4d4d4d" stroke-width="1.2" fill="none"/></svg>
<svg class="i" style="left:1184px;top:175px;" width="20" height="20" viewBox="0 0 20 20"><path d="M9 1.6C6.8 1.6 5.6 3.4 5.6 5.6C5.6 7.8 6.6 9.4 7.4 10.2V11.2C5 11.8 2.4 13 1.8 15.8H11.4A5 5 0 0 1 12.4 11.6C11.8 11.4 11.2 11.3 10.6 11.2V10.2C11.4 9.4 12.4 7.8 12.4 5.6C12.4 3.4 11.2 1.6 9 1.6Z" fill="#4d4d4d"/><circle cx="15.2" cy="14.8" r="4.2" fill="#4d4d4d"/><path d="M15.2 12.4V17.2M12.8 14.8H17.6" stroke="#e8e8e8" stroke-width="1.3"/></svg>
<div class="a" style="left:7px;top:204px;width:34px;height:549px;background:#f9f9f9;"></div>
<div class="a" style="left:41px;top:204px;width:1px;height:549px;background:#dfdfdf;"></div>
<div class="a" style="left:42px;top:204px;width:14px;height:549px;background:#ececec;"></div>
<div class="a" style="left:56px;top:204px;width:1095px;height:549px;background:#979797;"></div>
<div class="a" style="left:236px;top:204px;width:2px;height:549px;background:#8e8e8e;"></div>
<div class="a" style="left:238px;top:204px;width:732px;height:549px;background:#fdfdfe;"></div>
<div class="a" style="left:970px;top:204px;width:1px;height:549px;background:#929292;"></div>
<svg class="i" style="left:46px;top:473px;" width="6" height="10" viewBox="0 0 6 10"><path d="M5 0.5V9.5L0.5 5Z" fill="#6a6a6a"/></svg>
<svg class="i" style="left:16px;top:217px;" width="17" height="19" viewBox="0 0 17 19"><path d="M7 1.6H11.4L15 5.2V13.6H7Z" stroke="#4d4d4d" stroke-width="1.4" fill="none" stroke-linejoin="round"/><path d="M11.4 1.6V5.2H15" stroke="#4d4d4d" stroke-width="1.2" fill="none"/><path d="M7 5.6H3V17.4H11V13.6" stroke="#4d4d4d" stroke-width="1.4" fill="none"/></svg>
<svg class="i" style="left:17px;top:254px;" width="14" height="18" viewBox="0 0 14 18"><path d="M2 1.4H11.4V16.4L6.7 12.2L2 16.4Z" stroke="#4d4d4d" stroke-width="1.5" fill="none" stroke-linejoin="round"/></svg>
<svg class="i" style="left:15px;top:288px;" width="18" height="18" viewBox="0 0 18 18"><path d="M6.4 11.6L12.4 5.6A1.9 1.9 0 0 0 9.8 3L3.4 9.4A3.3 3.3 0 0 0 8 14L14.4 7.6" stroke="#4d4d4d" stroke-width="1.4" fill="none" stroke-linecap="round"/></svg>
<svg class="i" style="left:15px;top:326px;" width="18" height="19" viewBox="0 0 18 19"><path d="M9 1.6L16.4 5.6L9 9.6L1.6 5.6Z" stroke="#4d4d4d" stroke-width="1.4" fill="none" stroke-linejoin="round"/><path d="M1.6 9.2L9 13.2L16.4 9.2M1.6 12.8L9 16.8L16.4 12.8" stroke="#4d4d4d" stroke-width="1.4" fill="none" stroke-linejoin="round"/></svg>
<div class="a" style="left:1151px;top:204px;width:14px;height:549px;background:#f1f1f1;"></div>
<div class="a" style="left:1151px;top:204px;width:14px;height:6px;background:#e0e0e0;border-bottom:1px solid #bdbdbd;border-right:1px solid #bdbdbd"></div>
<svg class="i" style="left:1154px;top:213px;" width="9" height="6" viewBox="0 0 9 6"><path d="M0.8 5L4.5 1.2L8.2 5" stroke="#555" stroke-width="1.4" fill="none"/></svg>
<svg class="i" style="left:1154px;top:743px;" width="9" height="6" viewBox="0 0 9 6"><path d="M0.8 1L4.5 4.8L8.2 1" stroke="#555" stroke-width="1.4" fill="none"/></svg>
<div class="a" style="left:1152px;top:573px;width:12px;height:13px;background:#cdcdcd;"></div>
<div class="a" style="left:1165px;top:204px;width:1px;height:549px;background:#d4d4d6;"></div>
<div class="a" style="left:1166px;top:204px;width:14px;height:549px;background:#e9e9eb;"></div>
<svg class="i" style="left:1169px;top:473px;" width="6" height="10" viewBox="0 0 6 10"><path d="M5 0.5V9.5L0.5 5Z" fill="#6a6a6a"/></svg>
<div class="a" style="left:1180px;top:204px;width:35px;height:549px;background:#f9f9fa;"></div>
<div class="a" style="left:1187px;top:239px;width:20px;height:1px;background:#dedede;"></div>
<div class="a" style="left:1187px;top:717px;width:20px;height:1px;background:#dedede;"></div>
<svg class="i" style="left:1188px;top:210px;" width="20" height="20" viewBox="0 0 20 20"><circle cx="8.6" cy="8.6" r="6.4" stroke="#4d4d4d" stroke-width="1.8" fill="none"/><path d="M13.2 13.2L17.6 17.6" stroke="#4d4d4d" stroke-width="2.2"/><path d="M7.8 6.2L5.6 8.6L7.8 11Z M9.4 6.2L11.6 8.6L9.4 11Z" fill="#4d4d4d"/></svg>
<svg class="i" style="left:1188px;top:248px;" width="20" height="20" viewBox="0 0 20 20"><path d="M2.6 1.6H9L13.2 5.8V17H2.6Z" fill="#f8e4e4" stroke="#d65b5b" stroke-width="1.5" stroke-linejoin="round"/><path d="M7.4 6.4C7 8.4 6.2 10.4 5 12M7.4 6.4C7.8 8.6 8.8 10.4 10.4 11.6" stroke="#d65b5b" stroke-width="0.8" fill="none"/><circle cx="14.6" cy="14.2" r="4.6" fill="#e03c3c" stroke="#fff" stroke-width="1"/><path d="M12.2 14.2H17M14.6 11.8V16.6" stroke="#fff" stroke-width="1.5"/></svg>
<svg class="i" style="left:1188px;top:282px;" width="20" height="20" viewBox="0 0 20 20"><path d="M9 2.4H14.2L18 6.2V14H9Z" fill="#5b5ee6"/><path d="M1.8 2H8.6L11.4 4.8V12.6H1.8Z" fill="#e8e8fc" stroke="#5b5ee6" stroke-width="1.5" stroke-linejoin="round"/><path d="M6 5.4C5.6 7 5 8.6 4 10M6 5.4C6.4 7.2 7.2 8.6 8.4 9.4" stroke="#5b5ee6" stroke-width="0.8" fill="none"/><path d="M11 11V16" stroke="#5b5ee6" stroke-width="2"/><path d="M7.4 14.6L11 18.8L14.6 14.6Z" fill="#5b5ee6"/></svg>
<svg class="i" style="left:1188px;top:320px;" width="20" height="20" viewBox="0 0 20 20"><rect x="2" y="2.4" width="16" height="7" rx="1" fill="#f4b4d2" stroke="#c9508a" stroke-width="1.4"/><rect x="2" y="11.8" width="7.2" height="6.2" rx="0.8" fill="#f4d0e2" stroke="#c9508a" stroke-width="1.4"/><path d="M11.6 12.8H18.4M11.6 15.2H18.4M11.6 17.6H18.4" stroke="#c9508a" stroke-width="1.1"/></svg>
<svg class="i" style="left:1188px;top:355px;" width="20" height="20" viewBox="0 0 20 20"><path d="M3.6 1.8H11.6L16 6.2V18H3.6Z" fill="#ecc4f4" stroke="#a23ab8" stroke-width="1.6" stroke-linejoin="round"/><path d="M6.2 5H10M6.2 7.4H10" stroke="#c890d8" stroke-width="1.4"/><path d="M6.6 11.4H8.6V15.4H6.6Z M11.2 12.8H13.2V15.4H11.2Z" fill="#a23ab8"/></svg>
<svg class="i" style="left:1188px;top:392px;" width="20" height="20" viewBox="0 0 20 20"><path d="M13.4 2.2L17.4 6.2L8 15.6H4V11.6Z" fill="#e6dcfa" stroke="#7a4ee0" stroke-width="1.6" stroke-linejoin="round"/><path d="M2 17.6C4 15 6 17.2 7.6 16C9 15 10.4 16.8 12 16.6C13.6 16.4 14 15.6 15 16.2L18 17.4" stroke="#7a4ee0" stroke-width="1.4" fill="none"/></svg>
<svg class="i" style="left:1188px;top:426px;" width="20" height="20" viewBox="0 0 20 20"><path d="M2.6 1.6H9.4L13.6 5.8V17H2.6Z" fill="#d8f0f0" stroke="#1c8a8a" stroke-width="1.5" stroke-linejoin="round"/><path d="M7.6 6.4C7.2 8.4 6.4 10.4 5.2 12M7.6 6.4C8 8.6 9 10.4 10.6 11.6" stroke="#1c8a8a" stroke-width="0.8" fill="none"/><circle cx="14.6" cy="14.4" r="4.6" fill="#1c8a8a" stroke="#fff" stroke-width="1"/><path d="M12 14.4H16.6M14.8 12.4L17 14.4L14.8 16.4" stroke="#fff" stroke-width="1.4" fill="none"/></svg>
<svg class="i" style="left:1188px;top:463px;" width="20" height="20" viewBox="0 0 20 20"><rect x="10.6" y="1.8" width="7.4" height="16.2" fill="#dcf0c8" stroke="#7cc04a" stroke-width="1.5"/><path d="M2.2 7.6V18H8.4" stroke="#7cc04a" stroke-width="1.5" fill="none" stroke-dasharray="2 1.4"/><path d="M2.4 5.6L6.6 1.6M2.4 1.8V5.6H6.2" stroke="#7cc04a" stroke-width="1.3" fill="none"/></svg>
<svg class="i" style="left:1188px;top:498px;" width="20" height="20" viewBox="0 0 20 20"><path d="M2.6 1.6H9L13 5.6V17H2.6Z" fill="#f8eec4" stroke="#d8b81c" stroke-width="1.5" stroke-linejoin="round"/><path d="M9 1.6V5.6H13" stroke="#d8b81c" stroke-width="1.2" fill="none"/><rect x="10.4" y="10.4" width="8.4" height="6.4" fill="#d8b81c"/><path d="M12 17V19.6L14 17" fill="#d8b81c"/><path d="M12.2 13.2H17" stroke="#fff" stroke-width="1"/></svg>
<svg class="i" style="left:1188px;top:533px;" width="20" height="20" viewBox="0 0 20 20"><path d="M2 2.6H18V13.4H10.4L7.6 17V13.4H2Z" fill="#d6b41a"/><path d="M5.6 6.4H14.4M5.6 9.4H14.4" stroke="#fff" stroke-width="1.3"/></svg>
<svg class="i" style="left:1188px;top:571px;" width="20" height="20" viewBox="0 0 20 20"><path d="M6 1.6H11.4L14 4.2V8H6Z" fill="#d6f0de" stroke="#30a65a" stroke-width="1.4"/><path d="M2 8H18V14.4H15V12H5V14.4H2Z" fill="#30a65a"/><path d="M5 12V18H15V12" stroke="#30a65a" stroke-width="1.4" fill="none" stroke-dasharray="2 1"/><path d="M16 1.6L17 3M18.2 4.6L17.4 5.8" stroke="#30a65a" stroke-width="1"/></svg>
<svg class="i" style="left:1188px;top:606px;" width="20" height="20" viewBox="0 0 20 20"><path d="M10 1.8L17 4.4V10C17 14.2 13.8 17 10 18.4C6.2 17 3 14.2 3 10V4.4Z" fill="#f0f0f8" stroke="#5a5ed6" stroke-width="1.6" stroke-linejoin="round"/><path d="M10 3.2V17C6.8 15.8 4.4 13.4 4.4 10V5.2Z" fill="#d6d8ea"/></svg>
<svg class="i" style="left:1188px;top:643px;" width="20" height="20" viewBox="0 0 20 20"><path d="M14.6 2.2A4.4 4.4 0 0 0 10.2 7.6L2.6 15.2A1.6 1.6 0 0 0 4.8 17.4L12.4 9.8A4.4 4.4 0 0 0 17.8 5.4L15.4 7.6L12.6 7.4L12.4 4.6Z" fill="#4d4d4d"/><circle cx="14.6" cy="14.6" r="4.6" fill="#4d4d4d" stroke="#f9f9fa" stroke-width="1.2"/><path d="M12.2 14.6H17M14.6 12.2V17" stroke="#f0f0f0" stroke-width="1.4"/></svg>
<svg class="i" style="left:1188px;top:724px;" width="20" height="20" viewBox="0 0 20 20"><path d="M4.6 3.6V16.4" stroke="#4d4d4d" stroke-width="2"/><path d="M7.4 10H15.6" stroke="#4d4d4d" stroke-width="1.8"/><path d="M12.2 6.6L15.8 10L12.2 13.4" stroke="#4d4d4d" stroke-width="1.8" fill="none"/></svg>
<div class="a" style="left:0;top:0;width:1859px;height:753px;overflow:hidden"><div class="t" style="left:342.00px;top:250.78px;font-size:16.5px;line-height:16.5px;color:#333333;font-weight:400;font-family:'Liberation Serif',serif;width:574.81px;text-align:justify;text-align-last:justify;transform:scaleX(1.0518);transform-origin:0 0;">Plasmas respond strongly to electromagnetic fields, and therefore, the effect of electric</div>
<div class="t" style="left:342.00px;top:270.58px;font-size:16.5px;line-height:16.5px;color:#333333;font-weight:400;font-family:'Liberation Serif',serif;width:570.38px;text-align:justify;text-align-last:justify;transform:scaleX(1.0600);transform-origin:0 0;">and magnetic forces is critical to understanding the behavior of plasma. &nbsp;A charged</div>
<div class="t" style="left:342.00px;top:290.38px;font-size:16.5px;line-height:16.5px;color:#333333;font-weight:400;font-family:'Liberation Serif',serif;width:584.09px;text-align:justify;text-align-last:justify;transform:scaleX(1.0351);transform-origin:0 0;">particle in a plasma moves under the influence of the <i>Lorentz force</i> and thus its equation</div>
<div class="t" style="left:342.00px;top:309.78px;font-size:16.5px;line-height:16.5px;color:#333333;font-weight:400;font-family:'Liberation Serif',serif;transform:scaleX(1.0244);transform-origin:0 0;">of motion is:</div>
<div class="t" style="left:342.00px;top:364.18px;font-size:16.5px;line-height:16.5px;color:#333333;font-weight:400;font-family:'Liberation Serif',serif;width:570.38px;text-align:justify;text-align-last:justify;transform:scaleX(1.0600);transform-origin:0 0;">where <b>E</b> is the electric field, <b>B</b> the magnetic field and <b>v</b> the velocity of the charged</div>
<div class="t" style="left:342.00px;top:383.98px;font-size:16.5px;line-height:16.5px;color:#333333;font-weight:400;font-family:'Liberation Serif',serif;width:578.75px;text-align:justify;text-align-last:justify;transform:scaleX(1.0447);transform-origin:0 0;">particle. Note that the electric and magnetic fields that are used to calculate the Lorentz</div>
<div class="t" style="left:342.00px;top:403.68px;font-size:16.5px;line-height:16.5px;color:#333333;font-weight:400;font-family:'Liberation Serif',serif;width:574.61px;text-align:justify;text-align-last:justify;transform:scaleX(1.0522);transform-origin:0 0;">force <i>arise from all particles in the plasma and include also external (applied) electric</i></div>
<div class="t" style="left:342.00px;top:423.18px;font-size:16.5px;line-height:16.5px;color:#333333;font-weight:400;font-family:'Liberation Serif',serif;width:570.38px;text-align:justify;text-align-last:justify;transform:scaleX(1.0600);transform-origin:0 0;"><i>and magnetic fields</i>. Thus, it is clear that calculation of the motion of a large number</div>
<div class="t" style="left:342.00px;top:442.58px;font-size:16.5px;line-height:16.5px;color:#333333;font-weight:400;font-family:'Liberation Serif',serif;transform:scaleX(1.0398);transform-origin:0 0;">of plasma particles is an immense problem.</div>
<div class="t" style="left:342.00px;top:680.08px;font-size:16.5px;line-height:16.5px;color:#333333;font-weight:400;font-family:'Liberation Serif',serif;width:574.06px;text-align:justify;text-align-last:justify;transform:scaleX(1.0600);transform-origin:0 0;">Figure. Left: The electric field of the Lorentz force accelerates positive and negative</div>
<div class="t" style="left:342.00px;top:699.78px;font-size:16.5px;line-height:16.5px;color:#333333;font-weight:400;font-family:'Liberation Serif',serif;width:569.43px;text-align:justify;text-align-last:justify;transform:scaleX(1.0600);transform-origin:0 0;">charges to opposite directions. Right: The magnetic part of the Lorentz force changes</div>
<div class="t" style="left:342.00px;top:719.38px;font-size:16.5px;line-height:16.5px;color:#333333;font-weight:400;font-family:'Liberation Serif',serif;width:569.43px;text-align:justify;text-align-last:justify;transform:scaleX(1.0600);transform-origin:0 0;">the path of the particle. &nbsp;The direction of the bending can be inferred applying the</div>
<div class="t" style="left:342.00px;top:738.78px;font-size:16.5px;line-height:16.5px;color:#333333;font-weight:400;font-family:'Liberation Serif',serif;transform:scaleX(1.0666);transform-origin:0 0;">right-hand rule to the vector product.</div></div>
<div class="t" style="left:347.00px;top:203.49px;font-size:21.5px;line-height:21.5px;color:#222;font-weight:400;font-family:'Liberation Serif',serif;-webkit-text-stroke:0.45px #222;transform:scaleX(1.1453);transform-origin:0 0;">Plasma response to electromagnetic fields</div>
<div class="t" style="left:549.80px;top:332.98px;font-size:16.5px;line-height:16.5px;color:#2a2a2a;font-weight:400;font-family:'Liberation Serif',serif;transform:scaleX(0.9394);transform-origin:0 0;"><i>m</i></div>
<div class="t" style="left:565.90px;top:323.08px;font-size:16.5px;line-height:16.5px;color:#2a2a2a;font-weight:400;font-family:'Liberation Serif',serif;transform:scaleX(0.9394);transform-origin:0 0;"><i>d</i><b>v</b></div>
<div class="a" style="left:563px;top:341px;width:20px;height:1px;background:#2a2a2a;"></div>
<div class="t" style="left:567.00px;top:342.88px;font-size:16.5px;line-height:16.5px;color:#2a2a2a;font-weight:400;font-family:'Liberation Serif',serif;transform:scaleX(1.0122);transform-origin:0 0;"><i>dt</i></div>
<div class="t" style="left:589.40px;top:332.98px;font-size:16.5px;line-height:16.5px;color:#2a2a2a;font-weight:400;font-family:'Liberation Serif',serif;transform:scaleX(1.1383);transform-origin:0 0;">=</div>
<div class="t" style="left:606.00px;top:332.98px;font-size:16.5px;line-height:16.5px;color:#2a2a2a;font-weight:400;font-family:'Liberation Serif',serif;transform:scaleX(0.9313);transform-origin:0 0;"><b>F</b></div>
<div class="t" style="left:622.00px;top:332.98px;font-size:16.5px;line-height:16.5px;color:#2a2a2a;font-weight:400;font-family:'Liberation Serif',serif;transform:scaleX(1.1490);transform-origin:0 0;">=</div>
<div class="t" style="left:638.00px;top:332.98px;font-size:16.5px;line-height:16.5px;color:#2a2a2a;font-weight:400;font-family:'Liberation Serif',serif;transform:scaleX(1.0545);transform-origin:0 0;"><i>q</i>(</div>
<div class="t" style="left:653.00px;top:332.98px;font-size:16.5px;line-height:16.5px;color:#2a2a2a;font-weight:400;font-family:'Liberation Serif',serif;transform:scaleX(0.9713);transform-origin:0 0;"><b>E</b></div>
<div class="t" style="left:668.60px;top:332.98px;font-size:16.5px;line-height:16.5px;color:#2a2a2a;font-weight:400;font-family:'Liberation Serif',serif;transform:scaleX(1.0631);transform-origin:0 0;">+</div>
<div class="t" style="left:682.80px;top:332.98px;font-size:16.5px;line-height:16.5px;color:#2a2a2a;font-weight:400;font-family:'Liberation Serif',serif;transform:scaleX(1.0545);transform-origin:0 0;"><b>v</b></div>
<div class="t" style="left:698.00px;top:332.98px;font-size:16.5px;line-height:16.5px;color:#2a2a2a;font-weight:400;font-family:'Liberation Serif',serif;transform:scaleX(0.9020);transform-origin:0 0;">×</div>
<div class="t" style="left:713.00px;top:332.98px;font-size:16.5px;line-height:16.5px;color:#2a2a2a;font-weight:400;font-family:'Liberation Serif',serif;transform:scaleX(1.0258);transform-origin:0 0;"><b>B</b></div>
<div class="t" style="left:725.50px;top:332.98px;font-size:16.5px;line-height:16.5px;color:#2a2a2a;font-weight:400;font-family:'Liberation Serif',serif;transform:scaleX(0.9662);transform-origin:0 0;">),</div>
<div class="t" style="left:907.00px;top:332.98px;font-size:16.5px;line-height:16.5px;color:#2a2a2a;font-weight:400;font-family:'Liberation Serif',serif;transform:scaleX(0.9781);transform-origin:0 0;">(2.23)</div>
<svg class="i" style="left:420px;top:470px;" width="450" height="190" viewBox="0 0 450 190"><rect x="20.6" y="44" width="145.2" height="111" fill="#ececf0"/><rect x="20.6" y="38.7" width="145.2" height="5.8" fill="#6d7a86"/><rect x="20.6" y="155" width="145.2" height="5.4" fill="#6d7a86"/><path d="M30.699999999999978 56.200000000000045H37.09999999999998M33.89999999999998 53.00000000000004V59.40000000000005" stroke="#111" stroke-width="1.3"/><path d="M41.43636363636362 56.200000000000045H47.83636363636363M44.636363636363626 53.00000000000004V59.40000000000005" stroke="#111" stroke-width="1.3"/><path d="M52.17272727272727 56.200000000000045H58.57272727272728M55.372727272727275 53.00000000000004V59.40000000000005" stroke="#111" stroke-width="1.3"/><path d="M62.90909090909092 56.200000000000045H69.30909090909093M66.10909090909092 53.00000000000004V59.40000000000005" stroke="#111" stroke-width="1.3"/><path d="M73.64545454545451 56.200000000000045H80.04545454545452M76.84545454545452 53.00000000000004V59.40000000000005" stroke="#111" stroke-width="1.3"/><path d="M84.38181818181816 56.200000000000045H90.78181818181817M87.58181818181816 53.00000000000004V59.40000000000005" stroke="#111" stroke-width="1.3"/><path d="M95.11818181818175 56.200000000000045H101.51818181818176M98.31818181818176 53.00000000000004V59.40000000000005" stroke="#111" stroke-width="1.3"/><path d="M105.8545454545454 56.200000000000045H112.25454545454541M109.0545454545454 53.00000000000004V59.40000000000005" stroke="#111" stroke-width="1.3"/><path d="M116.59090909090905 56.200000000000045H122.99090909090906M119.79090909090905 53.00000000000004V59.40000000000005" stroke="#111" stroke-width="1.3"/><path d="M127.3272727272727 56.200000000000045H133.7272727272727M130.5272727272727 53.00000000000004V59.40000000000005" stroke="#111" stroke-width="1.3"/><path d="M138.06363636363636 56.200000000000045H144.46363636363634M141.26363636363635 53.00000000000004V59.40000000000005" stroke="#111" stroke-width="1.3"/><path d="M148.8 56.200000000000045H155.2M152.0 53.00000000000004V59.40000000000005" stroke="#111" stroke-width="1.3"/><path d="M26.6 147H31.4" stroke="#222" stroke-width="1.1"/><path d="M37.936363636363616 147H42.73636363636361" stroke="#222" stroke-width="1.1"/><path d="M49.27272727272729 147H54.072727272727285" stroke="#222" stroke-width="1.1"/><path d="M60.6090909090909 147H65.4090909090909" stroke="#222" stroke-width="1.1"/><path d="M71.94545454545457 147H76.74545454545458" stroke="#222" stroke-width="1.1"/><path d="M83.28181818181818 147H88.08181818181819" stroke="#222" stroke-width="1.1"/><path d="M94.6181818181818 147H99.41818181818181" stroke="#222" stroke-width="1.1"/><path d="M105.95454545454547 147H110.75454545454548" stroke="#222" stroke-width="1.1"/><path d="M117.29090909090914 147H122.09090909090915" stroke="#222" stroke-width="1.1"/><path d="M128.6272727272727 147H133.4272727272727" stroke="#222" stroke-width="1.1"/><path d="M139.96363636363637 147H144.76363636363638" stroke="#222" stroke-width="1.1"/><path d="M151.30000000000004 147H156.10000000000005" stroke="#222" stroke-width="1.1"/><path d="M38.2 67.5V106" stroke="#111" stroke-width="2.6"/><path d="M33.8 103L38.2 113L42.6 103Z" fill="#111"/><text x="45.5" y="91.5" font-family="Liberation Serif" font-weight="bold" font-size="15.5" fill="#111">E</text><path d="M83.5 87V108" stroke="#111" stroke-width="1.1"/><path d="M80.8 105L83.5 112L86.2 105Z" fill="#111"/><circle cx="83.5" cy="78.7" r="8.6" fill="#e31b23" stroke="#a01010" stroke-width="0.8"/><path d="M79.5 78.7H87.5M83.5 74.7V82.7" stroke="#222" stroke-width="1.6"/><path d="M125.4 120V103" stroke="#111" stroke-width="1.1"/><path d="M122.8 104.5L125.4 96.8L128 104.5Z" fill="#111"/><circle cx="125.4" cy="128.8" r="9" fill="#5b8dd0" stroke="#3a6ab0" stroke-width="0.8"/><path d="M122.80000000000001 128.8H128.0" stroke="#223" stroke-width="1.5"/><circle cx="222.70000000000005" cy="38.19999999999999" r="14.8" stroke="#111" stroke-width="1.3" fill="none"/><circle cx="222.70000000000005" cy="38.19999999999999" r="1.9" fill="#111"/><circle cx="290" cy="36.80000000000001" r="14.8" stroke="#111" stroke-width="1.3" fill="none"/><circle cx="290" cy="36.80000000000001" r="1.9" fill="#111"/><circle cx="372.79999999999995" cy="38.69999999999999" r="14.8" stroke="#111" stroke-width="1.3" fill="none"/><circle cx="372.79999999999995" cy="38.69999999999999" r="1.9" fill="#111"/><circle cx="222.70000000000005" cy="97.29999999999995" r="14.8" stroke="#111" stroke-width="1.3" fill="none"/><circle cx="222.70000000000005" cy="97.29999999999995" r="1.9" fill="#111"/><circle cx="288.5" cy="96.29999999999995" r="14.8" stroke="#111" stroke-width="1.3" fill="none"/><circle cx="288.5" cy="96.29999999999995" r="1.9" fill="#111"/><circle cx="374" cy="97.29999999999995" r="14.8" stroke="#111" stroke-width="1.3" fill="none"/><circle cx="374" cy="97.29999999999995" r="1.9" fill="#111"/><circle cx="225.60000000000002" cy="156.10000000000002" r="14.8" stroke="#111" stroke-width="1.3" fill="none"/><circle cx="225.60000000000002" cy="156.10000000000002" r="1.9" fill="#111"/><circle cx="290.5" cy="156.89999999999998" r="14.8" stroke="#111" stroke-width="1.3" fill="none"/><circle cx="290.5" cy="156.89999999999998" r="1.9" fill="#111"/><circle cx="376" cy="155.39999999999998" r="14.8" stroke="#111" stroke-width="1.3" fill="none"/><circle cx="376" cy="155.39999999999998" r="1.9" fill="#111"/><text x="217" y="72" font-family="Liberation Serif" font-weight="bold" font-size="15.5" fill="#111">B</text><path d="M237.5 97.3H263" stroke="#111" stroke-width="1.3"/><path d="M262 94.8L269 97.3L262 99.8Z" fill="#111"/><path d="M268 97.3H400" stroke="#111" stroke-width="1.1"/><path d="M398 94.6L406.5 97.3L398 100Z" fill="#111"/><circle cx="421.2" cy="97.3" r="8" fill="#c8c8cc" stroke="#8080a0" stroke-width="0.8"/><path d="M288.5 97.3C320 92 332 60 332.6 32" stroke="#111" stroke-width="1.2" fill="none"/><path d="M329.8 34L332.8 24.5L335.6 34Z" fill="#111"/><path d="M326 46H340" stroke="#777" stroke-width="0.8" stroke-dasharray="3 2"/><path d="M288.5 97.3C320 103 332 135 332.6 162" stroke="#111" stroke-width="1.2" fill="none"/><path d="M329.8 160L332.8 169.5L335.6 160Z" fill="#111"/><circle cx="346.2" cy="24.2" r="8" fill="#e31b23" stroke="#a01010" stroke-width="0.8"/><path d="M342.2 24.2H350.2M346.2 20.2V28.2" stroke="#222" stroke-width="1.6"/><circle cx="347.9" cy="165.8" r="8" fill="#5b8dd0" stroke="#3a6ab0" stroke-width="0.8"/><path d="M345.29999999999995 165.8H350.5" stroke="#223" stroke-width="1.5"/></svg>
</body></html>
